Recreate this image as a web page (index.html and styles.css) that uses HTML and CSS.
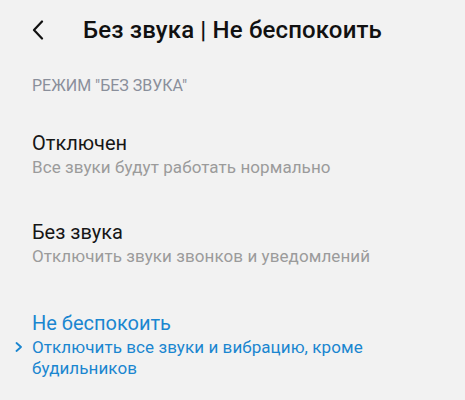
FILE: index.html
```html
<!DOCTYPE html>
<html lang="ru">
<head>
<meta charset="utf-8">
<link rel="stylesheet" href="styles.css">
</head>
<body>
<div class="screen">
  <header class="topbar">
    <svg class="back" width="12" height="20" viewBox="0 0 12 20"><path d="M10 1.5 L2 10 L10 18.5" fill="none" stroke="#111" stroke-width="2.2" stroke-linecap="round" stroke-linejoin="round"/></svg>
    <h1 class="title">Без звука | Не беспокоить</h1>
  </header>
  <div class="section">РЕЖИМ "БЕЗ ЗВУКА"</div>
  <div class="item first">
    <div class="item-title">Отключен</div>
    <div class="item-sub">Все звуки будут работать нормально</div>
  </div>
  <div class="item">
    <div class="item-title">Без звука</div>
    <div class="item-sub">Отключить звуки звонков и уведомлений</div>
  </div>
  <div class="item active">
    <svg class="mark" width="8" height="10" viewBox="0 0 8 10"><path d="M1.5 1 L6 5 L1.5 9" fill="none" stroke="#1a86d0" stroke-width="1.8" stroke-linecap="round" stroke-linejoin="round"/></svg>
    <div class="item-title">Не беспокоить</div>
    <div class="item-sub">Отключить все звуки и вибрацию, кроме будильников</div>
  </div>
</div>
</body>
</html>
```
FILE: styles.css
```css
html, body {
  margin: 0;
  padding: 0;
  background: #f2f2f2;
}
body {
  font-family: Roboto, "Noto Sans", sans-serif;
  width: 465px;
  height: 400px;
  overflow: hidden;
}
.screen {
  padding: 0 0 0 32px;
}
.topbar {
  display: flex;
  align-items: center;
  height: 60px;
}
.back {
  display: block;
}
.title {
  margin: 0 0 0 39px;
  font-size: 24px;
  font-weight: 500;
  letter-spacing: 0.15px;
  color: #111;
}
.section {
  margin-top: 16px;
  font-size: 16px;
  line-height: 20px;
  color: #8a8f9b;
}
.item {
  position: relative;
  margin-top: 42px;
}
.item.first {
  margin-top: 35px;
}
.item.active {
  margin-top: 44px;
}
.item-title {
  font-size: 20px;
  line-height: 24px;
  color: #161616;
}
.item-sub {
  margin-top: 2px;
  font-size: 17px;
  line-height: 21px;
  letter-spacing: 0.08px;
  color: #9b9b9b;
  width: 380px;
}
.active .item-title,
.active .item-sub {
  color: #1a86d0;
}
.mark {
  position: absolute;
  left: -17px;
  top: 31px;
}
```
